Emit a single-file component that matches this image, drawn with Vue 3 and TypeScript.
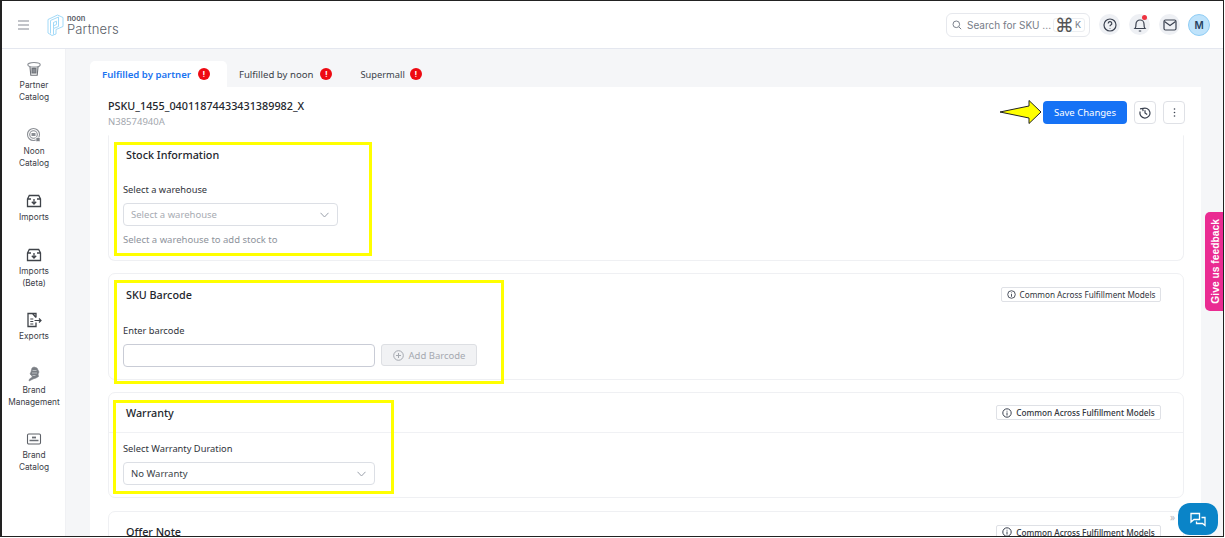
<script setup lang="ts">
interface NavItem { lines: string[]; icon: string; top: number }
const nav: NavItem[] = [
  { lines: ['Partner', 'Catalog'], icon: 'box', top: 12 },
  { lines: ['Noon', 'Catalog'], icon: 'noon', top: 24 },
  { lines: ['Imports'], icon: 'import', top: 24 },
  { lines: ['Imports', '(Beta)'], icon: 'import', top: 24 },
  { lines: ['Exports'], icon: 'export', top: 23 },
  { lines: ['Brand', 'Management'], icon: 'brand', top: 24 },
  { lines: ['Brand', 'Catalog'], icon: 'screen', top: 23 }
]
const tabs = [
  { label: 'Fulfilled by partner', active: true },
  { label: 'Fulfilled by noon', active: false },
  { label: 'Supermall', active: false }
]
const common = 'Common Across Fulfillment Models'
</script>

<template>
  <div class="frame">
    <header class="topbar">
      <svg class="burger" width="13" height="10" viewBox="0 0 13 10" fill="none" stroke="#858a94" stroke-width="1.100"><path d="M1 1h11M1 5h11M1 9h11" /></svg>
      <svg class="logo" width="17" height="22" viewBox="0 0 17 22" fill="none" stroke="#a3daf8" stroke-width="1"><path d="M1 5.500L10.500 1 16 3.500v9L9 15.500v4.500L5 21.500 1 19z" /><path d="M3.500 6.500L11.500 3v9.500L6.500 14.500v6M3.500 6.500V19.500" /><path d="M6.500 8.500l3-1.300v3.300l-3 1.300zM6.500 8.500v6" /></svg>
      <div class="brand"><span class="noon">noon</span><span class="partners">Partners</span></div>
      <div class="search">
        <svg width="10" height="10" viewBox="0 0 10 10" fill="none" stroke="#7b818c" stroke-width="1"><circle cx="4.300" cy="4.300" r="3.300" /><path d="M6.800 6.800l2.400 2.400" /></svg>
        <span class="search-text">Search for SKU ...</span>
        <span class="kbd"><span class="cmd">⌘</span><span class="k">K</span></span>
      </div>
      <span class="round">
        <svg width="14" height="14" viewBox="0 0 14 14" fill="none" stroke="#3b4250" stroke-width="1.200"><circle cx="7" cy="7" r="6" /><path d="M5.200 5.400a1.800 1.800 0 1 1 2.600 1.600c-.6.300-.8.600-.8 1.200M7 10v.5" /></svg>
      </span>
      <span class="round bell">
        <svg width="14" height="16" viewBox="0 0 14 16" fill="none" stroke="#3b4250" stroke-width="1.200"><path d="M2 11.500c1-1 1-2 1-4.500a4 4 0 0 1 8 0c0 2.500 0 3.500 1 4.500zM5.800 14h2.400" /></svg>
        <i class="dot"></i>
      </span>
      <span class="round">
        <svg width="14" height="12" viewBox="0 0 14 12" fill="none" stroke="#3b4250" stroke-width="1.200"><rect x="1" y="1" width="12" height="10" rx="1.500" /><path d="M1.500 2.500L7 6.500l5.500-4" /></svg>
      </span>
      <span class="avatar">M</span>
    </header>

    <div class="body">
      <aside class="side">
        <div v-for="item in nav" :key="item.lines.join()" class="nav-item" :style="{ marginTop: item.top + 'px' }">
          <svg width="16" height="16" viewBox="0 0 16 16" fill="none" stroke="#55595f" stroke-width="1.100">
            <template v-if="item.icon === 'box'"><ellipse cx="8" cy="3.800" rx="6.200" ry="2.300" stroke="#8a8e94" /><path d="M4 6l.8 8.200h6.400L12 6" stroke="#6f7379" /><rect x="6" y="7.500" width="4" height="4.500" fill="#8a8e94" stroke="#6f7379" /></template>
            <template v-else-if="item.icon === 'noon'"><circle cx="7.500" cy="7.500" r="6" stroke="#8a8e94" /><circle cx="7.500" cy="7.500" r="3.800" stroke="#8a8e94" /><rect x="5.500" y="6" width="4" height="3" fill="#8a8e94" stroke="none" /><rect x="10" y="10.500" width="4" height="4" fill="#80848a" stroke="#fff" stroke-width=".6" /></template>
            <template v-else-if="item.icon === 'import'"><path d="M1.500 6l1.800-3.500h9.400L14.500 6v7.500h-13zM1.500 6h3.500M11 6h3.500" stroke="#3f4349" stroke-width="1.300" /><path d="M8 6v5M5.800 8.800L8 11l2.200-2.200" stroke="#3f4349" stroke-width="1.300" /></template>
            <template v-else-if="item.icon === 'export'"><path d="M10 5.500V1.500H2v13h8v-4M6.500 1.500L10 5.500" stroke="#3f4349" stroke-width="1.300" /><path d="M4.300 7h3M4.300 9.500h3M4.300 12h3M8.500 8.500h6.500M13 6.500l2 2-2 2" stroke="#3f4349" stroke-width="1.200" /></template>
            <template v-else-if="item.icon === 'brand'"><path d="M6 2l2-1 3 1 1 2 1 2-1 2 .5 2.500L10 12l-3 1-4 2 .5-2 3-2-1-1.500L4 8l1-2z" fill="#7a7e84" stroke="#7a7e84" stroke-width=".6" /><path d="M6.500 4.500h4M6 7h5M6.500 9.500h3" stroke="#c9cbcf" stroke-width=".8" /></template>
            <template v-else><rect x="1.500" y="3" width="13" height="10" rx="1.200" stroke="#5e6268" /><path d="M3.500 9.500h9" stroke="#6a6e74" stroke-width="1.500" /><path d="M6 6.500h4" stroke="#6a6e74" stroke-width="1.800" /></template>
          </svg>
          <span v-for="line in item.lines" :key="line" class="nav-line">{{ line }}</span>
        </div>
      </aside>

      <main class="main">
        <nav class="tabs">
          <div v-for="tab in tabs" :key="tab.label" class="tab" :class="{ active: tab.active }">
            <span>{{ tab.label }}</span><b class="alert">!</b>
          </div>
        </nav>
        <section class="panel">
          <div class="panel-head">
            <div>
              <h1>PSKU_1455_04011874433431389982_X</h1>
              <p>N38574940A</p>
            </div>
            <div class="actions">
              <button class="save">Save Changes</button>
              <button class="icon-btn">
                <svg width="12" height="12" viewBox="0 0 12 12" fill="none" stroke="#3b4250" stroke-width="1.200"><path d="M3.500 1.700A5 5 0 1 1 1.200 4.500M6 3.200V6l2.200 1.600M1 1.800l2.700-.3.400 2.600" /></svg>
              </button>
              <button class="icon-btn">
                <svg width="3" height="11" viewBox="0 0 3 11" fill="#3b4250"><circle cx="1.500" cy="2" r=".8" /><circle cx="1.500" cy="5.500" r=".8" /><circle cx="1.500" cy="9" r=".8" /></svg>
              </button>
            </div>
          </div>

          <div class="card first">
            <h2>Stock Information</h2>
            <label class="gap-a">Select a warehouse</label>
            <div class="select short muted"><span>Select a warehouse</span><svg width="9" height="6" viewBox="0 0 9 6" fill="none" stroke="#9aa0aa"><path d="M.5.800L4.500 5l4-4.200" /></svg></div>
            <p class="hint">Select a warehouse to add stock to</p>
          </div>

          <div class="card barcode">
            <div class="card-top">
              <h2>SKU Barcode</h2>
              <span class="pill narrow"><svg width="9" height="9" viewBox="0 0 10 10" fill="none" stroke="#3b4250"><circle cx="5" cy="5" r="4.200" /><path d="M5 4.500v3M5 2.800v.8" /></svg>{{ common }}</span>
            </div>
            <label class="gap-b">Enter barcode</label>
            <div class="row">
              <div class="input"></div>
              <button class="add"><svg width="11" height="11" viewBox="0 0 11 11" fill="none" stroke="#a5a9b0"><circle cx="5.500" cy="5.500" r="4.800" /><path d="M5.500 3v5M3 5.500h5" /></svg>Add Barcode</button>
            </div>
          </div>

          <div class="card warranty">
            <div class="card-top">
              <h2>Warranty</h2>
              <span class="pill"><svg width="10" height="10" viewBox="0 0 10 10" fill="none" stroke="#3b4250"><circle cx="5" cy="5" r="4.200" /><path d="M5 4.500v3M5 2.800v.8" /></svg>{{ common }}</span>
            </div>
            <label class="gap-c">Select Warranty Duration</label>
            <div class="select wide"><span>No Warranty</span><svg width="9" height="6" viewBox="0 0 9 6" fill="none" stroke="#9aa0aa"><path d="M.5.800L4.500 5l4-4.200" /></svg></div>
          </div>

          <div class="card offer">
            <div class="card-top">
              <h2>Offer Note</h2>
              <span class="pill"><svg width="10" height="10" viewBox="0 0 10 10" fill="none" stroke="#3b4250"><circle cx="5" cy="5" r="4.200" /><path d="M5 4.500v3M5 2.800v.8" /></svg>{{ common }}</span>
            </div>
          </div>
        </section>
      </main>
    </div>

    <i class="mark m1"></i>
    <i class="mark m2"></i>
    <i class="mark m3"></i>
    <svg class="arrow" width="44" height="26" viewBox="0 0 44 26"><path d="M1 13l29-6V1.500l12 11.500-12 11.500V19z" fill="#ffff00" stroke="#222" stroke-width="1" /></svg>
    <div class="feedback"><span>Give us feedback</span></div>
    <span class="chev">»</span>
    <div class="chat">
      <svg width="16" height="15" viewBox="0 0 16 15" fill="none" stroke="#fff" stroke-width="1.300"><path d="M1 1.500h8.500v6H4L1 10zM11.500 5.500H15v8l-2.500-2H6.500V9.500" /></svg>
    </div>
  </div>
</template>

<style>
html, body { margin: 0; background: #fff; }
</style>

<style scoped>
.frame {
  position: relative;
  box-sizing: border-box;
  width: 1224px;
  height: 537px;
  border: 1px solid #222;
  border-left-width: 2px;
  overflow: hidden;
  display: flex;
  flex-direction: column;
  background: #fff;
  color: #23262d;
  font-family: "Noto Sans", sans-serif;
}
.topbar {
  flex: none;
  box-sizing: border-box;
  height: 48px;
  display: flex;
  align-items: center;
  padding: 0 13px 0 15px;
  border-bottom: 1px solid #e4e7ef;
}
.burger { margin-right: 17px; }
.logo { margin-right: 3px; }
.brand { display: flex; flex-direction: column; color: #5a6068; font-family: Inter, sans-serif; margin-top: 1px; }
.noon { font-size: 7.500px; line-height: 7px; font-weight: 600; }
.partners { font-size: 13px; line-height: 14px; font-weight: 300; letter-spacing: .15px; }
.search {
  margin-left: auto;
  box-sizing: border-box;
  width: 144px;
  height: 24px;
  display: flex;
  align-items: center;
  gap: 5px;
  padding-left: 5px;
  border: 1px solid #e6e8ed;
  border-radius: 6px;
  font: 10px Inter, sans-serif;
  color: #767c87;
}
.search-text { white-space: nowrap; width: 84px; flex: none; }
.kbd {
  box-sizing: border-box;
  flex: none;
  width: 32px;
  height: 14px;
  margin-left: -3px;
  display: flex;
  align-items: center;
  justify-content: space-between;
  padding: 0 3px 0 0;
  border: 1px solid #eceef1;
  border-radius: 3px;
}
.cmd { font: 19px/14px "DejaVu Sans", sans-serif; color: #555; margin-left: 1px; }
.k { font-size: 9px; }
.round {
  position: relative;
  width: 21px;
  height: 21px;
  margin-left: 9px;
  border-radius: 50%;
  background: #eef0f4;
  display: flex;
  align-items: center;
  justify-content: center;
}
.dot { position: absolute; right: 3px; top: 1px; width: 5px; height: 5px; border-radius: 50%; background: #ee3340; }
.avatar {
  box-sizing: border-box;
  width: 22px;
  height: 22px;
  margin-left: 8px;
  border-radius: 50%;
  background: #bfe3fb;
  border: 1px solid #8fcdf5;
  font: 600 10px/20px Inter, sans-serif;
  color: #27415e;
  text-align: center;
}
.body { flex: 1; display: flex; min-height: 0; }
.side {
  flex: none;
  width: 64px;
  box-sizing: border-box;
  padding-left: 1px;
  border-right: 1px solid #f0f1f4;
  display: flex;
  flex-direction: column;
  align-items: center;
  font: 8.300px/12px Inter, sans-serif;
  color: #3c4048;
}
.nav-item { display: flex; flex-direction: column; align-items: center; }
.nav-item svg { margin-bottom: 2px; }
.nav-line { white-space: nowrap; }
.main {
  flex: 1;
  min-width: 0;
  background: #f5f6f8;
  padding: 12px 22px 0 24px;
  display: flex;
  flex-direction: column;
}
.tabs { display: flex; height: 26px; flex: none; }
.tab {
  display: flex;
  align-items: center;
  gap: 7px;
  padding: 0 14px 0 12px;
  font-size: 9.600px;
  color: #3a3f48;
  border-radius: 5px 5px 0 0;
}
.tab + .tab + .tab { padding-left: 14px; font-size: 9.300px; gap: 5px; }
.tab.active { background: #fff; color: #1a73f0; font-weight: 600; padding: 0 17px 0 12px; font-size: 9.600px; }
.alert {
  width: 12px;
  height: 12px;
  border-radius: 50%;
  background: #ee0a12;
  color: #fff;
  font: 700 8px/12px Inter, sans-serif;
  text-align: center;
}
.panel { flex: 1; min-height: 0; background: #fff; padding: 0 17px 0 18px; overflow: hidden; }
.panel-head { height: 48px; display: flex; justify-content: space-between; align-items: flex-start; padding-top: 11px; box-sizing: border-box; }
h1 { margin: 0 0 2px; font-size: 10.800px; line-height: 16px; font-weight: 500; color: #23262d; }
.panel-head p { margin: 0; font-size: 9.500px; line-height: 12px; color: #a3a7ae; }
.actions { display: flex; gap: 7px; margin-right: -1px; margin-top: 3px; }
button { font-family: inherit; margin: 0; padding: 0; }
.save {
  width: 84px;
  height: 23px;
  border: 0;
  border-radius: 4px;
  background: #1672f5;
  color: #fff;
  font-size: 9.500px;
}
.icon-btn {
  width: 22px;
  height: 23px;
  border: 1px solid #dfe1e6;
  border-radius: 4px;
  background: #fff;
  display: flex;
  align-items: center;
  justify-content: center;
}
.card {
  box-sizing: border-box;
  border: 1px solid #eff0f3;
  border-radius: 7px;
  margin-bottom: 12px;
  background: #fff;
  padding: 0 22px 0 14px;
}
.first { height: 126px; border-top-color: transparent; border-radius: 0 0 7px 7px; }
.barcode { height: 107px; }
.warranty { height: 106px; padding: 0; margin-bottom: 13px; }
.offer { height: 60px; margin-bottom: 0; }
h2 { margin: 0 0 0 3px; font-size: 10.800px; line-height: 16px; font-weight: 500; color: #23262d; }
.first h2 { padding-top: 11px; }
label { display: block; font-size: 9.300px; line-height: 13px; color: #2f333a; }
.gap-a { margin-top: 20px; }
.gap-b { margin-top: 19px; }
.gap-c { margin: 9px 0 0 14px; }
.card-top { display: flex; justify-content: space-between; align-items: center; height: 31px; padding-top: 10px; box-sizing: border-box; }
.warranty .card-top { padding: 0 22px 0 14px; height: 40px; border-bottom: 1px solid #f0f1f4; }
.offer .card-top { padding: 0; height: 40px; }
.pill {
  box-sizing: border-box;
  width: 165px;
  height: 15px;
  display: flex;
  align-items: center;
  justify-content: center;
  gap: 4px;
  border: 1px solid #dfe1e6;
  border-radius: 2px;
  font-size: 8.200px;
  font-weight: 500;
  color: #30343b;
  white-space: nowrap;
}
.pill.narrow { width: 160px; font-weight: 400; margin-top: -1px; }
.select {
  box-sizing: border-box;
  height: 23px;
  display: flex;
  align-items: center;
  justify-content: space-between;
  padding: 0 8px 0 7px;
  border: 1px solid #dcdfe5;
  border-radius: 4px;
  font-size: 9.500px;
}
.select.short { width: 215px; margin-top: 7px; }
.select.wide { width: 252px; margin: 7px 0 0 14px; color: #3a3f48; }
.muted { color: #a7abb2; }
.hint { margin: 7px 0 0; font-size: 9.500px; line-height: 13px; color: #8e939c; }
.row { display: flex; gap: 6px; margin-top: 7px; align-items: flex-start; }
.input { box-sizing: border-box; width: 252px; height: 23px; border: 1px solid #c9ccd6; border-radius: 4px; }
.add {
  box-sizing: border-box;
  width: 96px;
  height: 22px;
  display: flex;
  align-items: center;
  justify-content: center;
  gap: 5px;
  border: 1px solid #dddfe3;
  border-radius: 3px;
  background: #f1f2f4;
  color: #a5a9b0;
  font-size: 9.500px;
}
.mark { position: absolute; box-sizing: border-box; border: 3px solid #ffff00; }
.m1 { left: 112px; top: 141px; width: 258px; height: 114px; }
.m2 { left: 112px; top: 279px; width: 390px; height: 104px; }
.m3 { left: 111px; top: 399px; width: 281px; height: 94px; }
.arrow { position: absolute; left: 997px; top: 98px; }
.feedback {
  position: absolute;
  left: 1203px;
  top: 211px;
  width: 20px;
  height: 99px;
  background: #ea2b92;
  border-radius: 5px 0 0 5px;
  display: flex;
  align-items: center;
  justify-content: center;
}
.feedback span {
  writing-mode: vertical-rl;
  transform: rotate(180deg);
  color: #fff;
  font: 700 10.300px "Liberation Sans", sans-serif;
  white-space: nowrap;
}
.chev { position: absolute; left: 1168px; top: 509px; font-size: 10px; color: #b5b8be; }
.chat {
  position: absolute;
  left: 1176px;
  top: 502px;
  width: 40px;
  height: 32px;
  border-radius: 12px;
  background: #0a84c8;
  display: flex;
  align-items: center;
  justify-content: center;
}
</style>
